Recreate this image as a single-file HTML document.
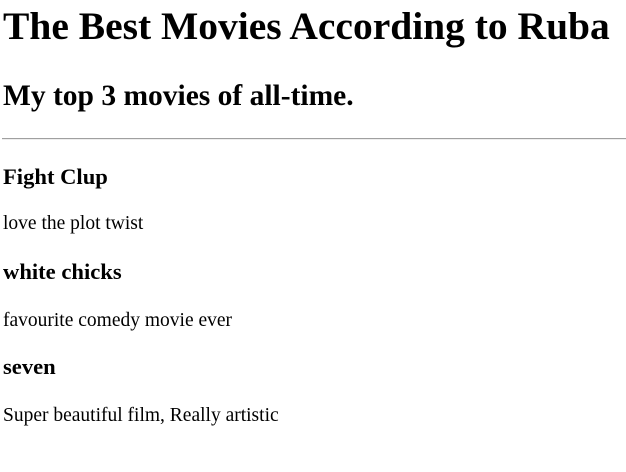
<!DOCTYPE html>
<html><head><meta charset="utf-8"><style>
html,body{margin:0;padding:0;background:#fff;width:626px;height:472px;overflow:hidden}
body{font-family:"Liberation Serif",serif;color:#000;position:relative}
div{position:absolute;left:3px;line-height:1;white-space:nowrap}
.h1{font-size:39.5px;font-weight:bold;top:7px}
.h2{font-size:29.5px;font-weight:bold;top:82px}
.h3{font-size:22.6px;font-weight:bold}
.p{font-size:19.5px}
.hr{left:2px;width:624px;top:138px;height:0;border-top:1px solid #a0a0a0;border-bottom:1px solid #eee}
</style></head><body>
<div class="h1">The Best Movies According to Ruba</div>
<div class="h2">My top 3 movies of all-time.</div>
<div class="hr"></div>
<div class="h3" style="top:166px">Fight Clup</div>
<div class="p" style="top:214px">love the plot twist</div>
<div class="h3" style="top:261px">white chicks</div>
<div class="p" style="top:311px">favourite comedy movie ever</div>
<div class="h3" style="top:356px">seven</div>
<div class="p" style="top:406px">Super beautiful film, Really artistic</div>
</body></html>
